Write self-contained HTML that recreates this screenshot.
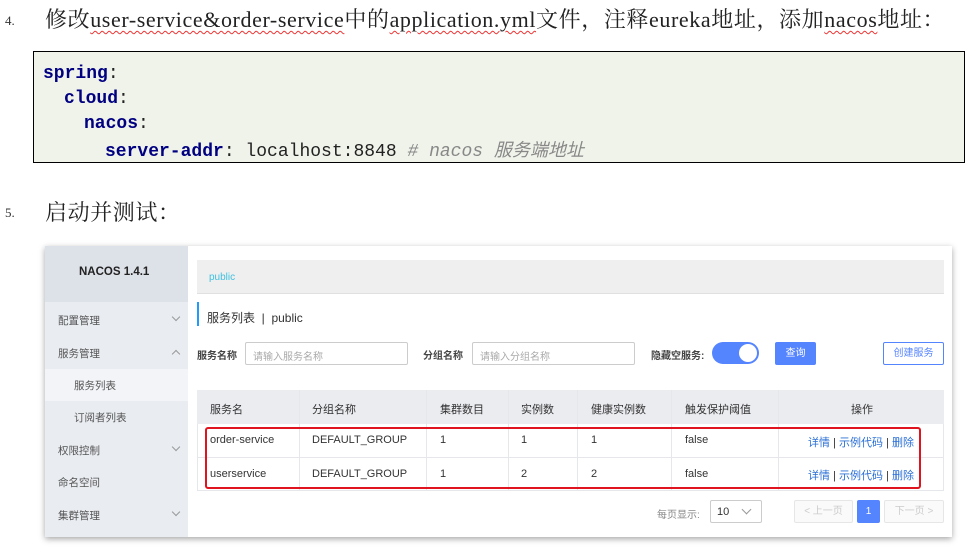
<!DOCTYPE html>
<html><head><meta charset="utf-8"><style>
*{margin:0;padding:0;box-sizing:border-box}
body{width:970px;height:553px;background:#fff;position:relative;overflow:hidden;font-family:"Liberation Sans","Noto Sans CJK SC",sans-serif}
.a{position:absolute;white-space:nowrap}
.h{font-family:"Liberation Serif","Noto Serif CJK SC",serif;font-size:22px;color:#222;letter-spacing:0.6px}
.w{text-decoration:underline wavy #e33;text-decoration-thickness:1px;text-underline-offset:3px}
.num{font-family:"Liberation Serif",serif;font-size:13px;color:#333}
.code{position:absolute;left:33px;top:51px;width:932px;height:112px;background:#f0f3ea;border:1px solid #000}
.cl{position:absolute;font-family:"Liberation Mono","Noto Sans CJK SC",monospace;font-size:18px;white-space:pre;color:#222}
.k{color:#000080;font-weight:bold}
.c{color:#888;font-style:italic}
.s{font-size:11px;color:#333}
.sb{font-size:10.5px;color:#555}
.chev{position:absolute;width:6px;height:6px;border-right:1px solid #999;border-bottom:1px solid #999}
</style></head><body>
<div class="a num" style="left:5px;top:13px">4.</div>
<div class="a h" style="left:45px;top:3px">修改<span class="w">user-service&amp;order-service</span>中的<span class="w">application.yml</span>文件，注释eureka地址，添加<span class="w">nacos</span>地址：</div>
<div class="code"></div>
<div class="cl" style="left:43px;top:64px"><span class="k">spring</span>:</div>
<div class="cl" style="left:64px;top:89px"><span class="k">cloud</span>:</div>
<div class="cl" style="left:84px;top:114px"><span class="k">nacos</span>:</div>
<div class="cl" style="left:105px;top:136px"><span class="k">server-addr</span>: localhost:8848 <span class="c"># nacos 服务端地址</span></div>
<div class="a num" style="left:5px;top:205px">5.</div>
<div class="a h" style="left:45px;top:196px">启动并测试：</div>

<div class="a" style="left:45px;top:246px;width:907px;height:291px;box-shadow:0 2px 6px rgba(0,0,0,.35);background:#fff"></div>
<div class="a" style="left:45px;top:246px;width:143px;height:291px;background:#e9ecf1"></div>
<div class="a" style="left:45px;top:246px;width:143px;height:56px;background:#dde1e8"></div>
<div class="a" style="left:79px;top:266px;font-size:11.5px;font-weight:bold;color:#222">NACOS 1.4.1</div>
<div class="a" style="left:45px;top:369px;width:143px;height:32px;background:#f2f4f7"></div>
<div class="a sb" style="left:58px;top:313px">配置管理</div><div class="chev" style="left:173px;top:314px;transform:rotate(45deg)"></div>
<div class="a sb" style="left:58px;top:346px">服务管理</div><div class="chev" style="left:173px;top:351px;transform:rotate(225deg)"></div>
<div class="a sb" style="left:74px;top:378px">服务列表</div>
<div class="a sb" style="left:74px;top:410px">订阅者列表</div>
<div class="a sb" style="left:58px;top:443px">权限控制</div><div class="chev" style="left:173px;top:444px;transform:rotate(45deg)"></div>
<div class="a sb" style="left:58px;top:475px">命名空间</div>
<div class="a sb" style="left:58px;top:508px">集群管理</div><div class="chev" style="left:173px;top:509px;transform:rotate(45deg)"></div>

<div class="a" style="left:197px;top:260px;width:747px;height:34px;background:#efefef;border-bottom:1px solid #e0e0e0"></div>
<div class="a" style="left:209px;top:272px;font-size:10px;color:#3ec0e0">public</div>
<div class="a" style="left:197px;top:302px;width:2px;height:24px;background:#209bfa"></div>
<div class="a" style="left:207px;top:309px;font-size:12px;color:#333">服务列表 &nbsp;|&nbsp; public</div>

<div class="a" style="left:197px;top:347px;font-size:10px;font-weight:bold;color:#444">服务名称</div>
<div class="a" style="left:245px;top:342px;width:163px;height:23px;border:1px solid #ccc;border-radius:2px;font-size:10px;color:#aaa;padding:5px 7px">请输入服务名称</div>
<div class="a" style="left:423px;top:347px;font-size:10px;font-weight:bold;color:#444">分组名称</div>
<div class="a" style="left:472px;top:342px;width:163px;height:23px;border:1px solid #ccc;border-radius:2px;font-size:10px;color:#aaa;padding:5px 7px">请输入分组名称</div>
<div class="a" style="left:651px;top:347px;font-size:10px;font-weight:bold;color:#444">隐藏空服务:</div>
<div class="a" style="left:712px;top:342px;width:47px;height:22px;border-radius:11px;background:#5584ff"></div>
<div class="a" style="left:739px;top:344px;width:18px;height:18px;border-radius:9px;background:#fff"></div>
<div class="a" style="left:775px;top:342px;width:41px;height:23px;background:#5584ff;border-radius:2px;color:#fff;font-size:10px;text-align:center;line-height:23px">查询</div>
<div class="a" style="left:883px;top:342px;width:61px;height:23px;border:1px solid #5584ff;border-radius:2px;color:#5584ff;font-size:10px;text-align:center;line-height:21px">创建服务</div>

<div class="a" style="left:197px;top:390px;width:747px;height:101px;border:1px solid #e6e7eb"></div>
<div class="a" style="left:197px;top:390px;width:747px;height:34px;background:#ebecf0"></div>
<div class="a" style="left:197px;top:457px;width:747px;height:1px;background:#e6e7eb"></div>
<div class="a" style="left:299px;top:390px;width:1px;height:101px;background:#e6e7eb"></div>
<div class="a" style="left:426px;top:390px;width:1px;height:101px;background:#e6e7eb"></div>
<div class="a" style="left:508px;top:390px;width:1px;height:101px;background:#e6e7eb"></div>
<div class="a" style="left:577px;top:390px;width:1px;height:101px;background:#e6e7eb"></div>
<div class="a" style="left:671px;top:390px;width:1px;height:101px;background:#e6e7eb"></div>
<div class="a" style="left:778px;top:390px;width:1px;height:101px;background:#e6e7eb"></div>
<div class="a s" style="left:210px;top:401px">服务名</div>
<div class="a s" style="left:312px;top:401px">分组名称</div>
<div class="a s" style="left:440px;top:401px">集群数目</div>
<div class="a s" style="left:521px;top:401px">实例数</div>
<div class="a s" style="left:591px;top:401px">健康实例数</div>
<div class="a s" style="left:685px;top:401px">触发保护阈值</div>
<div class="a s" style="left:851px;top:401px">操作</div>
<div class="a s" style="left:210px;top:434px">order-service</div>
<div class="a s" style="left:312px;top:434px">DEFAULT_GROUP</div>
<div class="a s" style="left:440px;top:434px">1</div>
<div class="a s" style="left:521px;top:434px">1</div>
<div class="a s" style="left:591px;top:434px">1</div>
<div class="a s" style="left:685px;top:434px">false</div>
<div class="a s" style="left:808px;top:434px;color:#2a6fd6">详情 <span style="color:#333">|</span> 示例代码 <span style="color:#333">|</span> 删除</div>
<div class="a s" style="left:210px;top:468px">userservice</div>
<div class="a s" style="left:312px;top:468px">DEFAULT_GROUP</div>
<div class="a s" style="left:440px;top:468px">1</div>
<div class="a s" style="left:521px;top:468px">2</div>
<div class="a s" style="left:591px;top:468px">2</div>
<div class="a s" style="left:685px;top:468px">false</div>
<div class="a s" style="left:808px;top:467px;color:#2a6fd6">详情 <span style="color:#333">|</span> 示例代码 <span style="color:#333">|</span> 删除</div>
<div class="a" style="left:205px;top:427px;width:716px;height:62px;border:2px solid #e0141e;border-radius:3px"></div>

<div class="a" style="left:657px;top:506px;font-size:10px;color:#888">每页显示:</div>
<div class="a" style="left:710px;top:500px;width:52px;height:23px;border:1px solid #ccc;border-radius:2px;font-size:11px;color:#333;padding:5px 6px">10</div>
<div class="chev" style="left:743px;top:506px;transform:rotate(45deg);width:7px;height:7px"></div>
<div class="a" style="left:794px;top:500px;width:59px;height:23px;border:1px solid #e6e6e6;background:#fafafa;border-radius:2px;font-size:10px;color:#ccc;text-align:center;line-height:22px">&lt; 上一页</div>
<div class="a" style="left:857px;top:500px;width:23px;height:23px;background:#5584ff;border-radius:2px;font-size:10px;color:#fff;text-align:center;line-height:23px">1</div>
<div class="a" style="left:884px;top:500px;width:60px;height:23px;border:1px solid #e6e6e6;background:#fafafa;border-radius:2px;font-size:10px;color:#ccc;text-align:center;line-height:22px">下一页 &gt;</div>
</body></html>
